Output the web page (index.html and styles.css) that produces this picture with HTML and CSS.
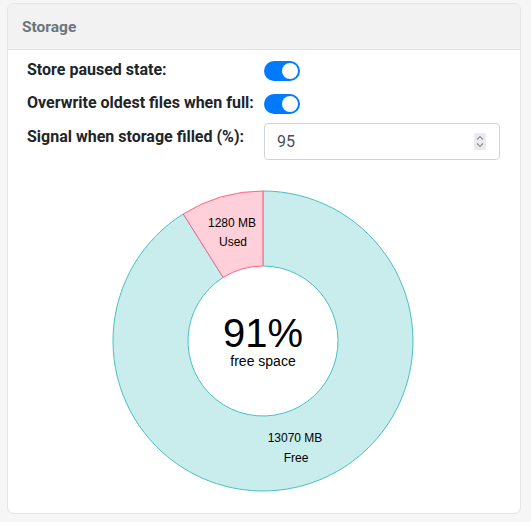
FILE: index.html
```html
<!DOCTYPE html>
<html>
<head>
<meta charset="utf-8">
<link rel="stylesheet" href="styles.css">
</head>
<body>
<div class="card">
  <div class="card-header">Storage</div>
  <div class="card-body">
    <div class="row row-1">
      <div class="label">Store paused state:</div>
      <div class="control"><span class="switch"><span class="knob"></span></span></div>
    </div>
    <div class="row row-2">
      <div class="label">Overwrite oldest files when full:</div>
      <div class="control"><span class="switch"><span class="knob"></span></span></div>
    </div>
    <div class="row row-3">
      <div class="label label-input">Signal when storage filled (%):</div>
      <div class="control">
        <div class="number-input">
          <input class="number-value" type="text" value="95">
          <span class="spinner">
            <svg width="12" height="17" viewBox="0 0 12 17">
              <path d="M3 6.5 L6 3.5 L9 6.5" fill="none" stroke="#8e8e93" stroke-width="1.1"/>
              <path d="M3 10.5 L6 13.5 L9 10.5" fill="none" stroke="#8e8e93" stroke-width="1.1"/>
            </svg>
          </span>
        </div>
      </div>
    </div>
    <div class="chart">
      <svg class="donut" width="302" height="302" viewBox="0 0 302 302">
        <path d="M151 1 A150 150 0 1 1 71.26 23.95 L111.13 87.47 A75 75 0 1 0 151 76 Z" fill="rgb(201,236,236)" stroke="rgb(75,192,192)" stroke-width="1"/>
        <path d="M71.26 23.95 A150 150 0 0 1 151 1 L151 76 A75 75 0 0 0 111.13 87.47 Z" fill="rgb(255,208,218)" stroke="rgb(255,99,132)" stroke-width="1"/>
        <text class="seg-label" x="120" y="36.5" text-anchor="middle">1280 MB</text>
        <text class="seg-label" x="121" y="56" text-anchor="middle">Used</text>
        <text class="seg-label" x="183" y="252.3" text-anchor="middle">13070 MB</text>
        <text class="seg-label" x="184" y="272.3" text-anchor="middle">Free</text>
        <text class="big" x="151" y="157" text-anchor="middle">91%</text>
        <text class="small" x="151" y="175.5" text-anchor="middle">free space</text>
      </svg>
    </div>
  </div>
</div>
</body>
</html>
```
FILE: styles.css
```css
html, body {
  margin: 0;
  padding: 0;
}
body {
  background: #f6f6f6;
  font-family: Roboto, "Liberation Sans", Arial, sans-serif;
  width: 531px;
  height: 522px;
  overflow: hidden;
}
.card {
  margin: 3px 0 0 7px;
  width: 514px;
  height: 511px;
  box-sizing: border-box;
  background: #fff;
  border: 1px solid #e4e4e4;
  border-radius: 7px;
  overflow: hidden;
}
.card-header {
  height: 46px;
  box-sizing: border-box;
  background: #f2f2f2;
  border-bottom: 1px solid #e3e3e3;
  padding: 0 14px;
  font-size: 15.5px;
  font-weight: 700;
  color: #6c757d;
  line-height: 47px;
}
.card-body {
  padding: 9px 20px 0 19px;
}
.row {
  display: flex;
  align-items: flex-start;
}
.row-1 { height: 22px; margin-bottom: 11px; }
.row-2 { height: 22px; margin-bottom: 9px; }
.row-3 { height: 37px; }
.label {
  width: 237px;
  font-size: 16px;
  font-weight: 700;
  color: #212529;
  line-height: 22px;
}
.label-input {
  padding-top: 3px;
}
.control {
  width: 236px;
}
.switch {
  display: block;
  margin-top: 2px;
  width: 36px;
  height: 20px;
  border-radius: 10px;
  background: #007bff;
  position: relative;
}
.knob {
  position: absolute;
  top: 2px;
  right: 2px;
  width: 16px;
  height: 16px;
  border-radius: 50%;
  background: #fff;
}
.number-input {
  display: flex;
  align-items: center;
  height: 37px;
  box-sizing: border-box;
  border: 1px solid #ced4da;
  border-radius: 4px;
  padding: 0 13px 0 12px;
}
.number-value {
  flex: 1;
  min-width: 0;
  border: 0;
  outline: none;
  padding: 0;
  margin: 0;
  font-family: Roboto, "Liberation Sans", Arial, sans-serif;
  font-size: 16px;
  color: #495057;
  background: transparent;
}
.spinner {
  display: block;
  width: 12px;
  height: 17px;
  background: #ebebef;
}
.spinner svg {
  display: block;
}
.chart {
  display: flex;
  justify-content: center;
  padding-top: 30px;
}
.donut {
  display: block;
  margin-left: -2px;
}
.donut text {
  font-family: "Liberation Sans", Arial, sans-serif;
  fill: #000;
}
.seg-label {
  font-size: 12px;
  fill: #222;
}
.big {
  font-size: 40px;
}
.small {
  font-size: 14px;
}
```
